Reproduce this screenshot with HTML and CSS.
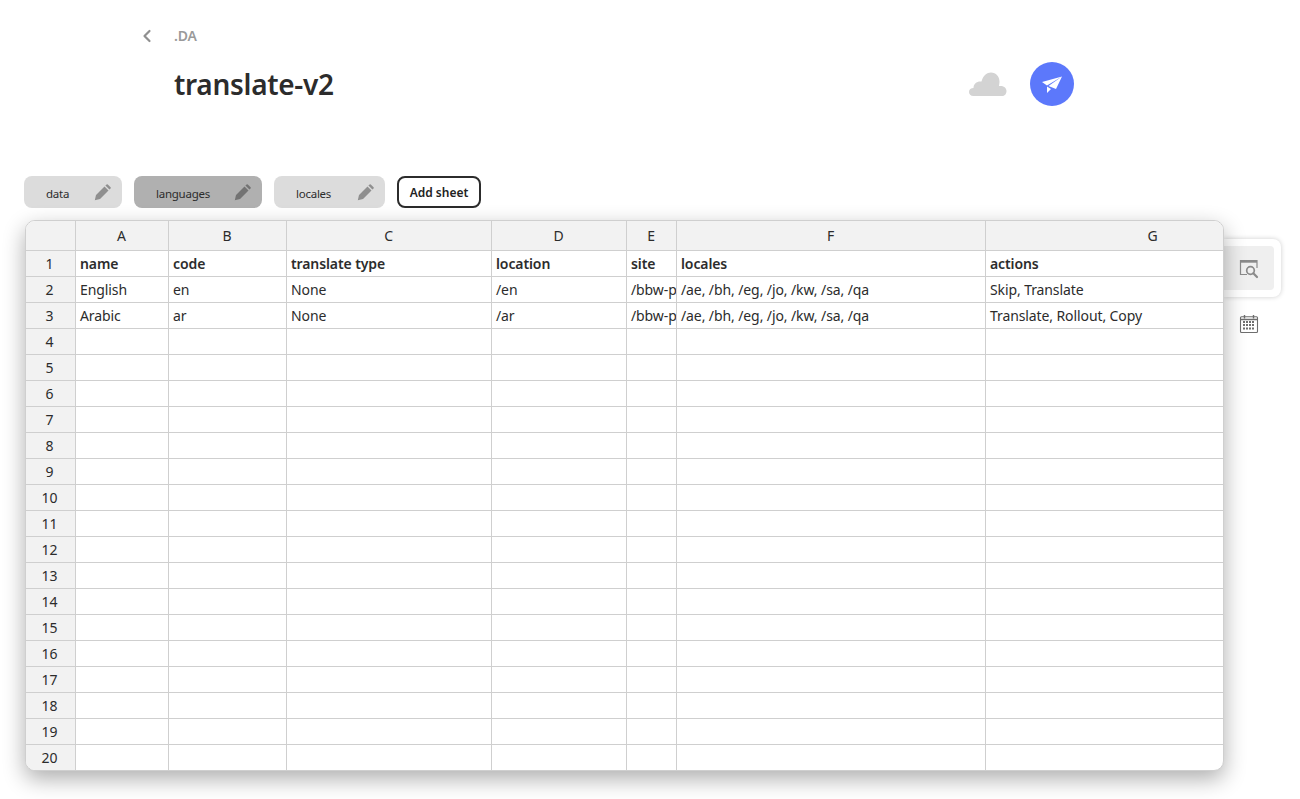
FILE: index.html
```html
<!DOCTYPE html>
<html lang="en">
<head>
<meta charset="utf-8">
<title>translate-v2</title>
<link rel="stylesheet" href="styles.css">
</head>
<body>
<header class="top">
  <div class="crumb">
    <svg class="chev" width="10" height="14" viewBox="0 0 10 14"><path d="M7.5 2 L2.5 7 L7.5 12" fill="none" stroke="#909090" stroke-width="2.2" stroke-linecap="round" stroke-linejoin="round"/></svg>
    <span class="da">.DA</span>
  </div>
  <div class="title-row">
    <h1 class="title">translate-v2</h1>
    <div class="actions">
      <svg class="cloud" width="38" height="26" viewBox="0 0 38 26"><path d="M4.5 25 C1.5 25 0 23 0 21 C0 18.5 2 17 4.5 17 C4.5 12.5 8 10 12.5 10.5 C14 4.5 18 1.5 22 1.5 C27 1.5 30.5 5.5 30.5 10.5 C30.5 12.5 30 14 30 15 C34 14.5 37.5 16.5 37.5 20 C37.5 23 35.5 25 33 25 Z" fill="#d3d3d3"/></svg>
      <div class="send">
        <svg width="22" height="18" viewBox="0 0 22 18"><path d="M21 1.5 L1 7 L6 10.5 Z M21 1.5 L7.5 11 L15 14 Z M6 11.5 L6 18 L10 14 Z" fill="#fff"/></svg>
      </div>
    </div>
  </div>
</header>
<nav class="tabs">
  <div class="tab"><span class="tab-name">data</span><svg class="pencil" width="18" height="18" viewBox="0 0 18 18"><path d="M0.8 17.2 L2 12 L10.5 3.5 L14.5 7.5 L6 16 Z M11.4 2.6 L12.6 1.4 Q13.2 0.9 13.8 1.4 L16.6 4.2 Q17.1 4.8 16.6 5.4 L15.4 6.6 Z" fill="#8f8f8f"/></svg></div>
  <div class="tab tab-active"><span class="tab-name">languages</span><svg class="pencil" width="18" height="18" viewBox="0 0 18 18"><path d="M0.8 17.2 L2 12 L10.5 3.5 L14.5 7.5 L6 16 Z M11.4 2.6 L12.6 1.4 Q13.2 0.9 13.8 1.4 L16.6 4.2 Q17.1 4.8 16.6 5.4 L15.4 6.6 Z" fill="#737373"/></svg></div>
  <div class="tab tab-locales"><span class="tab-name">locales</span><svg class="pencil" width="18" height="18" viewBox="0 0 18 18"><path d="M0.8 17.2 L2 12 L10.5 3.5 L14.5 7.5 L6 16 Z M11.4 2.6 L12.6 1.4 Q13.2 0.9 13.8 1.4 L16.6 4.2 Q17.1 4.8 16.6 5.4 L15.4 6.6 Z" fill="#8f8f8f"/></svg></div>
  <button class="add">Add sheet</button>
</nav>
<section class="work">
  <div class="sheet">
    <table>
      <colgroup><col class="c0"><col class="c1"><col class="c2"><col class="c3"><col class="c4"><col class="c5"><col class="c6"><col class="c7"></colgroup>
      <thead><tr><th></th><th>A</th><th>B</th><th>C</th><th>D</th><th>E</th><th>F</th><th>G</th></tr></thead>
      <tbody>
        <tr class="bold"><th>1</th><td>name</td><td>code</td><td>translate type</td><td>location</td><td>site</td><td>locales</td><td>actions</td></tr>
        <tr><th>2</th><td>English</td><td>en</td><td>None</td><td>/en</td><td class="cut">/bbw-p</td><td>/ae, /bh, /eg, /jo, /kw, /sa, /qa</td><td>Skip, Translate</td></tr>
        <tr><th>3</th><td>Arabic</td><td>ar</td><td>None</td><td>/ar</td><td class="cut">/bbw-p</td><td>/ae, /bh, /eg, /jo, /kw, /sa, /qa</td><td>Translate, Rollout, Copy</td></tr>
        <tr><th>4</th><td></td><td></td><td></td><td></td><td></td><td></td><td></td></tr>
        <tr><th>5</th><td></td><td></td><td></td><td></td><td></td><td></td><td></td></tr>
        <tr><th>6</th><td></td><td></td><td></td><td></td><td></td><td></td><td></td></tr>
        <tr><th>7</th><td></td><td></td><td></td><td></td><td></td><td></td><td></td></tr>
        <tr><th>8</th><td></td><td></td><td></td><td></td><td></td><td></td><td></td></tr>
        <tr><th>9</th><td></td><td></td><td></td><td></td><td></td><td></td><td></td></tr>
        <tr><th>10</th><td></td><td></td><td></td><td></td><td></td><td></td><td></td></tr>
        <tr><th>11</th><td></td><td></td><td></td><td></td><td></td><td></td><td></td></tr>
        <tr><th>12</th><td></td><td></td><td></td><td></td><td></td><td></td><td></td></tr>
        <tr><th>13</th><td></td><td></td><td></td><td></td><td></td><td></td><td></td></tr>
        <tr><th>14</th><td></td><td></td><td></td><td></td><td></td><td></td><td></td></tr>
        <tr><th>15</th><td></td><td></td><td></td><td></td><td></td><td></td><td></td></tr>
        <tr><th>16</th><td></td><td></td><td></td><td></td><td></td><td></td><td></td></tr>
        <tr><th>17</th><td></td><td></td><td></td><td></td><td></td><td></td><td></td></tr>
        <tr><th>18</th><td></td><td></td><td></td><td></td><td></td><td></td><td></td></tr>
        <tr><th>19</th><td></td><td></td><td></td><td></td><td></td><td></td><td></td></tr>
        <tr><th>20</th><td></td><td></td><td></td><td></td><td></td><td></td><td></td></tr>
      </tbody>
    </table>
  </div>
  <aside class="side">
    <div class="side-card">
      <div class="side-active">
        <svg class="search" width="20" height="20" viewBox="0 0 20 20" fill="none" stroke="#8a8a8a"><path d="M8 15.5 H1.5 V1.5 H18 V9" stroke-width="1.2"/><path d="M1.5 2.5 H18" stroke-width="2.4"/><circle cx="11.5" cy="11.5" r="3.8" stroke-width="1.7"/><path d="M14.3 14.3 L18 18" stroke-width="2.2" stroke-linecap="round"/></svg>
      </div>
    </div>
    <div class="side-cal">
      <svg width="20" height="20" viewBox="0 0 20 20"><rect x="1.5" y="2.8" width="17" height="15.7" rx="1" fill="none" stroke="#6e6e6e" stroke-width="1.1"/><path d="M1.5 5.5 H18.5" stroke="#6e6e6e" stroke-width="1.5"/><path d="M5.5 1 V4.5 M14.5 1 V4.5" stroke="#6e6e6e" stroke-width="1.4"/><path d="M4 8 H16 M4 11 H16 M4 14.4 H16" stroke="#6e6e6e" stroke-width="2" stroke-dasharray="2 1"/></svg>
    </div>
  </aside>
</section>
</body>
</html>
```
FILE: styles.css
```css
* { box-sizing: border-box; }
html, body { margin: 0; padding: 0; background: #fff; }
body {
  width: 1300px;
  height: 799px;
  overflow: hidden;
  font-family: "Noto Sans", "Open Sans", sans-serif;
  color: #2c2c2c;
}
.top { padding: 25px 226px 0 142px; height: 176px; }
.crumb { display: flex; align-items: center; gap: 22px; height: 20px; }
.chev { display: block; margin-top: 2px; }
.da { font-size: 14px; font-weight: 600; color: #9a9a9a; letter-spacing: -0.2px; }
.title-row { display: flex; align-items: center; justify-content: space-between; padding-left: 32px; margin-top: 17px; }
.title { margin: 0; font-size: 28px; line-height: 44px; font-weight: 600; color: #2c2c2c; letter-spacing: -0.3px; }
.actions { display: flex; align-items: center; gap: 23px; }
.cloud { display: block; }
.send { width: 44px; height: 44px; border-radius: 50%; background: #5c78fb; display: flex; align-items: center; justify-content: center; }
.tabs { display: flex; align-items: center; gap: 12px; padding-left: 24px; height: 32px; }
.tab { width: 98px; height: 32px; border-radius: 8px; background: #dcdcdc; display: flex; align-items: center; justify-content: space-between; padding: 0 10px 0 22px; }
.tab-active { width: 128px; background: #b0b0b0; }
.tab-locales { width: 111px; }
.tab-name { font-size: 11.5px; color: #2c2c2c; padding-top: 2px; letter-spacing: -0.25px; }
.pencil { display: block; }
.add { width: 84px; height: 32px; border: 2px solid #2c2c2c; border-radius: 8px; background: #fff; font: 600 12px "Noto Sans", sans-serif; color: #222; padding: 0; }
.work { display: flex; align-items: flex-start; padding: 12px 0 0 25px; }
.sheet { position: relative; z-index: 1; width: 1199px; height: 551px; border: 1px solid #cfcfcf; border-radius: 10px; overflow: hidden; box-shadow: 0 8px 22px rgba(0,0,0,0.32); background: #fff; }
table { border-collapse: separate; border-spacing: 0; table-layout: fixed; width: 1295px; font-size: 14px; letter-spacing: -0.1px; }
.c0 { width: 50px; } .c1 { width: 93px; } .c2 { width: 118px; } .c3 { width: 205px; }
.c4 { width: 135px; } .c5 { width: 50px; } .c6 { width: 309px; } .c7 { width: 335px; }
th, td { border-right: 1px solid #cfcfcf; border-bottom: 1px solid #cfcfcf; padding: 0; white-space: nowrap; overflow: hidden; }
thead th { height: 30px; background: #f2f2f2; font-weight: 400; text-align: center; padding-right: 1px; }
tbody tr { height: 26px; }
tbody th { background: #f2f2f2; font-weight: 400; text-align: center; padding-right: 2px; }
tbody td { padding: 0 4px; }
tbody td.cut { padding-right: 0; }
.bold td { font-weight: 600; }
.side { width: 57px; margin-top: 19px; }
.side-card { width: 57px; height: 58px; background: #fff; border-radius: 0 8px 8px 0; box-shadow: 0 0 5px rgba(0,0,0,0.2); padding: 7px 7px 7px 0; }
.side-active { width: 50px; height: 44px; border-radius: 0 4px 4px 0; background: #efefef; display: flex; align-items: center; justify-content: center; }
.search { margin-top: 2px; }
.side-cal { width: 50px; height: 34px; margin-top: 10px; display: flex; align-items: center; justify-content: center; }
```
